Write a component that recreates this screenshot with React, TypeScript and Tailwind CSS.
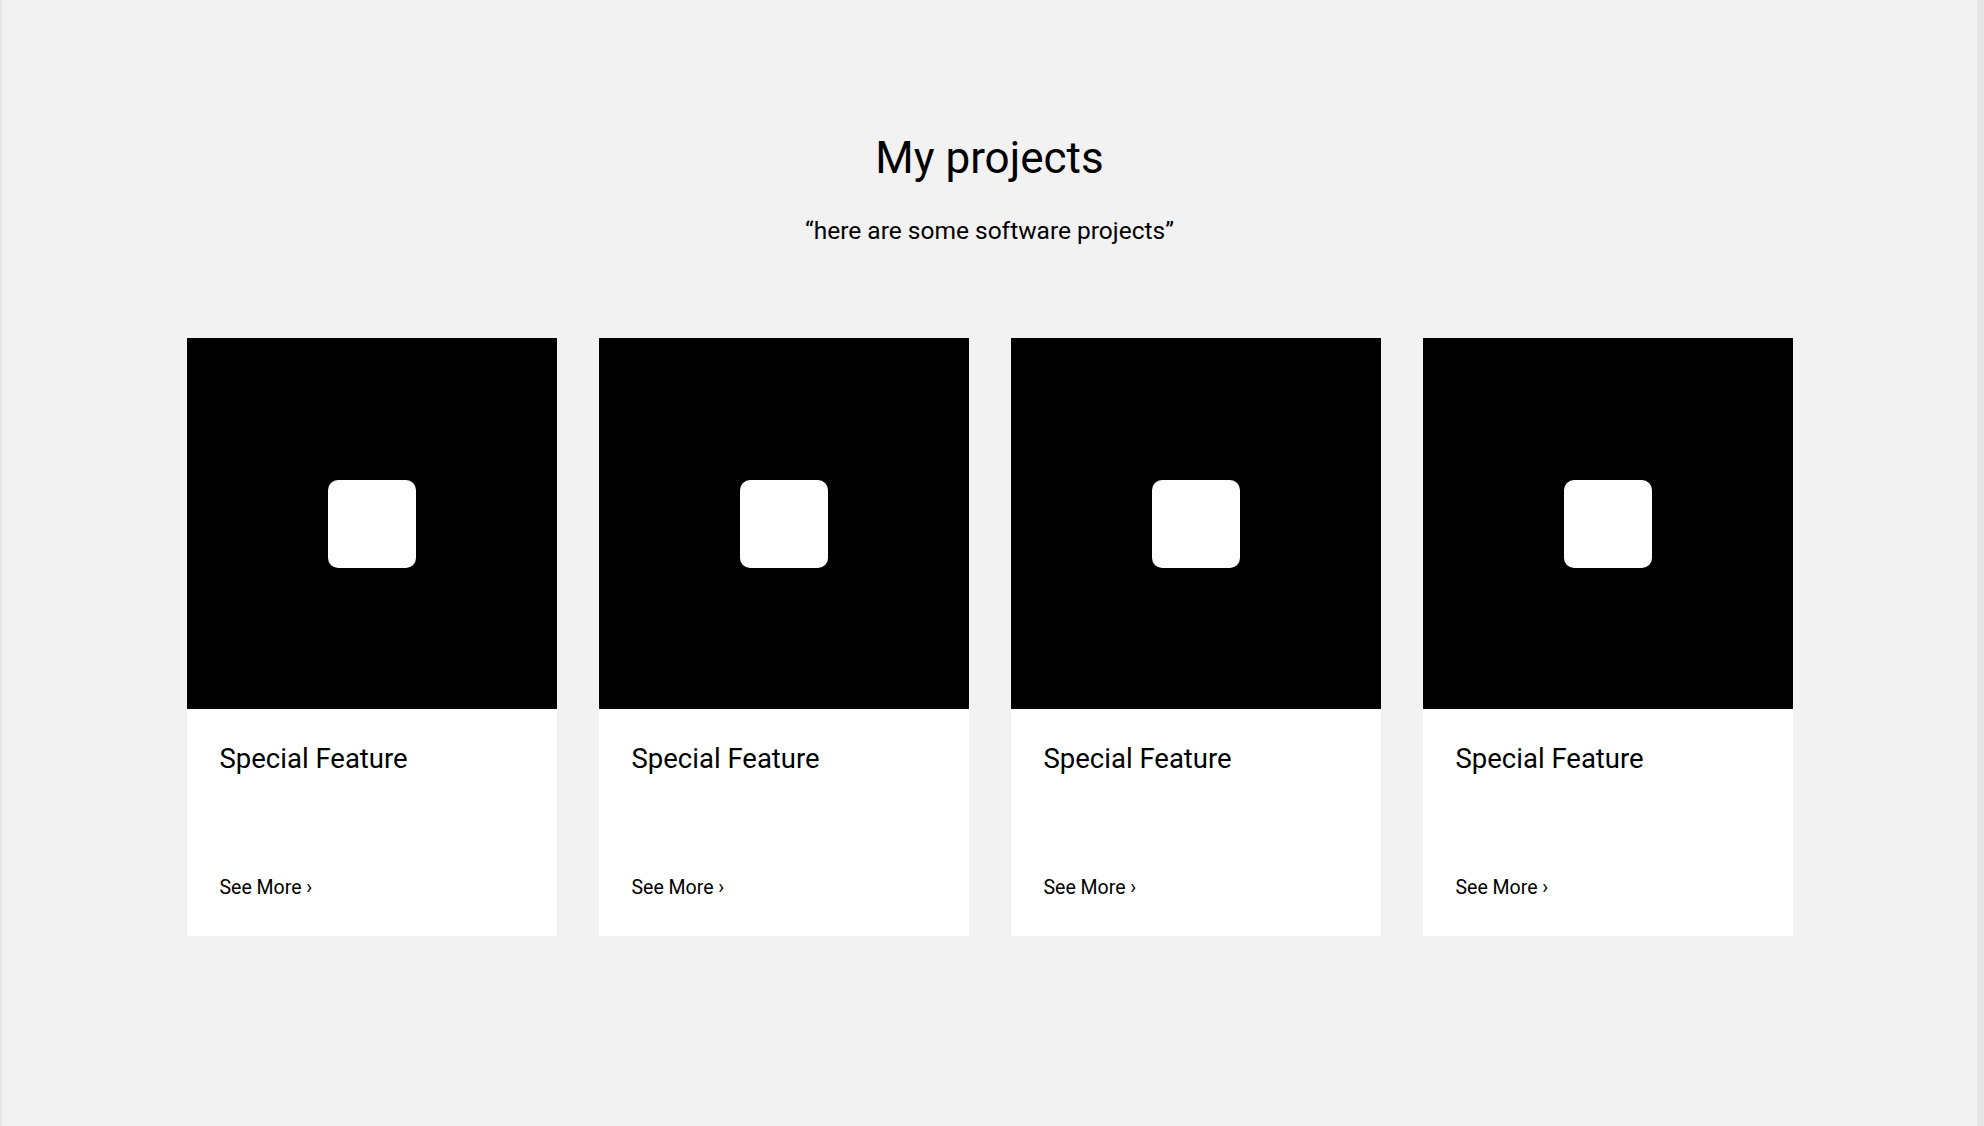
import React from "react";

function Card() {
  return (
    <div className="w-[370px] flex flex-col bg-white">
      <div className="w-[370px] h-[371px] bg-black flex items-center justify-center">
        <div className="w-[88px] h-[88px] bg-white rounded-[10px]" />
      </div>
      <div className="flex flex-col pl-[33px] pt-[36px] pb-[38px]">
        <div className="text-[27.5px] leading-[28px] text-black">Special Feature</div>
        <div className="mt-[105px] text-[19.5px] leading-[20px] text-black">See More ›</div>
      </div>
    </div>
  );
}

export default function App() {
  return (
    <div
      className="w-full h-[1126px] bg-[#f2f2f2] border-l-[2px] border-r-[7px] border-[#e6e6e6] flex flex-col items-center"
      style={{ fontFamily: "Roboto, 'Liberation Sans', sans-serif" }}
    >
      <h1 className="mt-[136px] text-[44px] leading-[44px] text-black font-normal">My projects</h1>
      <p className="mt-[38px] text-[24.5px] leading-[25px] text-black">“here are some software projects”</p>
      <div className="mt-[95px] flex gap-[42px]">
        <Card />
        <Card />
        <Card />
        <Card />
      </div>
    </div>
  );
}
